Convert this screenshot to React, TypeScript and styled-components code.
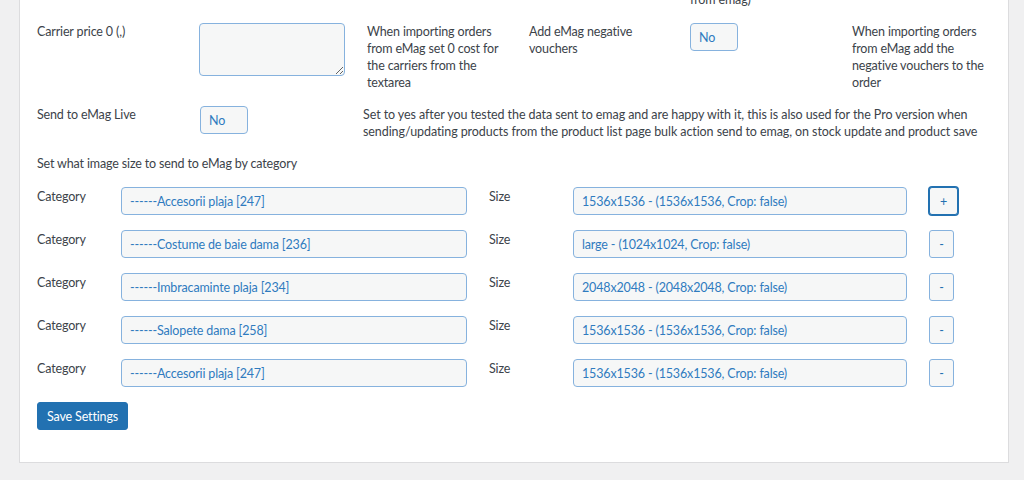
import styled, { createGlobalStyle } from 'styled-components';

const GlobalStyle = createGlobalStyle`
  html, body {
    margin: 0;
    padding: 0;
    background-color: #f0f0f1;
    font-family: Lato, 'Liberation Sans', sans-serif;
    font-size: 12.5px;
    letter-spacing: -0.15px;
    color: #3c434a;
    overflow: hidden;
  }
`;

const categories = [
  { category: '------Accesorii plaja [247]', size: '1536x1536 - (1536x1536, Crop: false)' },
  { category: '------Costume de baie dama [236]', size: 'large - (1024x1024, Crop: false)' },
  { category: '------Imbracaminte plaja [234]', size: '2048x2048 - (2048x2048, Crop: false)' },
  { category: '------Salopete dama [258]', size: '1536x1536 - (1536x1536, Crop: false)' },
  { category: '------Accesorii plaja [247]', size: '1536x1536 - (1536x1536, Crop: false)' },
];

const Page = styled.div`
  height: 480px;
  padding-left: 19px;
`;

const Card = styled.form`
  width: 990px;
  box-sizing: border-box;
  margin-top: -9px;
  padding: 0 17px 32px;

  background-color: #fff;
  border: 1px solid #dcdcde;
  border-top: none;

  display: flex;
  flex-direction: column;
  gap: 15px;
`;

const OptionsGrid = styled.div`
  display: grid;
  grid-template-columns: 162px 168px 162px 161px 162px 1fr;
  row-gap: 15px;
  align-items: start;
`;

const LiveRow = styled.div`
  display: grid;
  grid-template-columns: 163px 163px 1fr;
  align-items: start;
`;

const Label = styled.div<{ $col?: number }>`
  grid-column: ${(p) => p.$col ?? 'auto'};
  line-height: 17px;
  padding-right: 20px;
`;

const Desc = styled.div<{ $col?: number }>`
  grid-column: ${(p) => p.$col ?? 'auto'};
  line-height: 17px;
  max-width: 142px;
`;

const WideDesc = styled.div`
  line-height: 17px;
  letter-spacing: -0.08px;
  white-space: nowrap;
`;

const fieldBase = `
  box-sizing: border-box;
  height: 28px;
  margin: 0;
  padding: 0 8px;

  background-color: #f6f7f7;
  border: 1px solid #86b2de;
  border-radius: 4px;

  font-family: Lato, 'Liberation Sans', sans-serif;
  font-size: 12.5px;
  letter-spacing: -0.15px;
  color: #2f7bbf;

  appearance: none;
  outline: none;
`;

const Select = styled.select<{ $w: number }>`
  ${fieldBase}
  width: ${(p) => p.$w}px;
`;

const TextArea = styled.textarea`
  ${fieldBase}
  width: 146px;
  height: 53px;
  resize: both;
`;

const Heading = styled.div`
  line-height: 17px;
`;

const CategoryList = styled.div`
  display: flex;
  flex-direction: column;
  gap: 15px;
`;

const CategoryRow = styled.div`
  display: grid;
  grid-template-columns: 84px 368px 84px 356px max-content;
  align-items: start;
`;

const RowLabel = styled.div`
  line-height: 17px;
  padding-top: 1px;
`;

const RowButton = styled.button<{ $focused?: boolean }>`
  justify-self: start;
  box-sizing: border-box;
  height: 28px;
  min-width: ${(p) => (p.$focused ? 29 : 25)}px;
  padding: 0 8px;

  background-color: #f6f7f7;
  border: 1px solid ${(p) => (p.$focused ? '#2271b1' : '#86b2de')};
  border-radius: 3px;
  box-shadow: ${(p) => (p.$focused ? '0 0 0 1px #2271b1' : 'none')};

  font-family: Lato, 'Liberation Sans', sans-serif;
  font-size: 12.5px;
  color: #2271b1;
  cursor: pointer;
`;

const SaveButton = styled.button`
  align-self: flex-start;
  box-sizing: border-box;
  height: 28px;
  padding: 0 9px;

  background-color: #2271b1;
  border: 1px solid #2271b1;
  border-radius: 3px;

  font-family: Lato, 'Liberation Sans', sans-serif;
  font-size: 12.5px;
  letter-spacing: -0.15px;
  color: #fff;
  cursor: pointer;
`;

function App() {
  return (
    <>
      <GlobalStyle />
      <Page>
        <Card onSubmit={(e) => e.preventDefault()}>
          <OptionsGrid>
            <Desc $col={5}>from emag)</Desc>

            <Label $col={1}>Carrier price 0 (,)</Label>
            <div>
              <TextArea readOnly defaultValue="" />
            </div>
            <Desc>When importing orders from eMag set 0 cost for the carriers from the textarea</Desc>
            <Label>Add eMag negative vouchers</Label>
            <div>
              <Select $w={48} defaultValue="no">
                <option value="no">No</option>
              </Select>
            </div>
            <Desc>When importing orders from eMag add the negative vouchers to the order</Desc>
          </OptionsGrid>

          <LiveRow>
            <Label>Send to eMag Live</Label>
            <div>
              <Select $w={48} defaultValue="no">
                <option value="no">No</option>
              </Select>
            </div>
            <WideDesc>
              Set to yes after you tested the data sent to emag and are happy with it, this is also used
              for the Pro version when
              <br />
              sending/updating products from the product list page bulk action send to emag, on stock
              update and product save
            </WideDesc>
          </LiveRow>

          <Heading>Set what image size to send to eMag by category</Heading>

          <CategoryList>
            {categories.map((row, i) => (
              <CategoryRow key={i}>
                <RowLabel>Category</RowLabel>
                <Select $w={346} defaultValue={row.category}>
                  <option value={row.category}>{row.category}</option>
                </Select>
                <RowLabel>Size</RowLabel>
                <Select $w={334} defaultValue={row.size}>
                  <option value={row.size}>{row.size}</option>
                </Select>
                <RowButton type="button" $focused={i === 0}>
                  {i === 0 ? '+' : '-'}
                </RowButton>
              </CategoryRow>
            ))}
          </CategoryList>

          <SaveButton type="submit">Save Settings</SaveButton>
        </Card>
      </Page>
    </>
  );
}

export default App;
